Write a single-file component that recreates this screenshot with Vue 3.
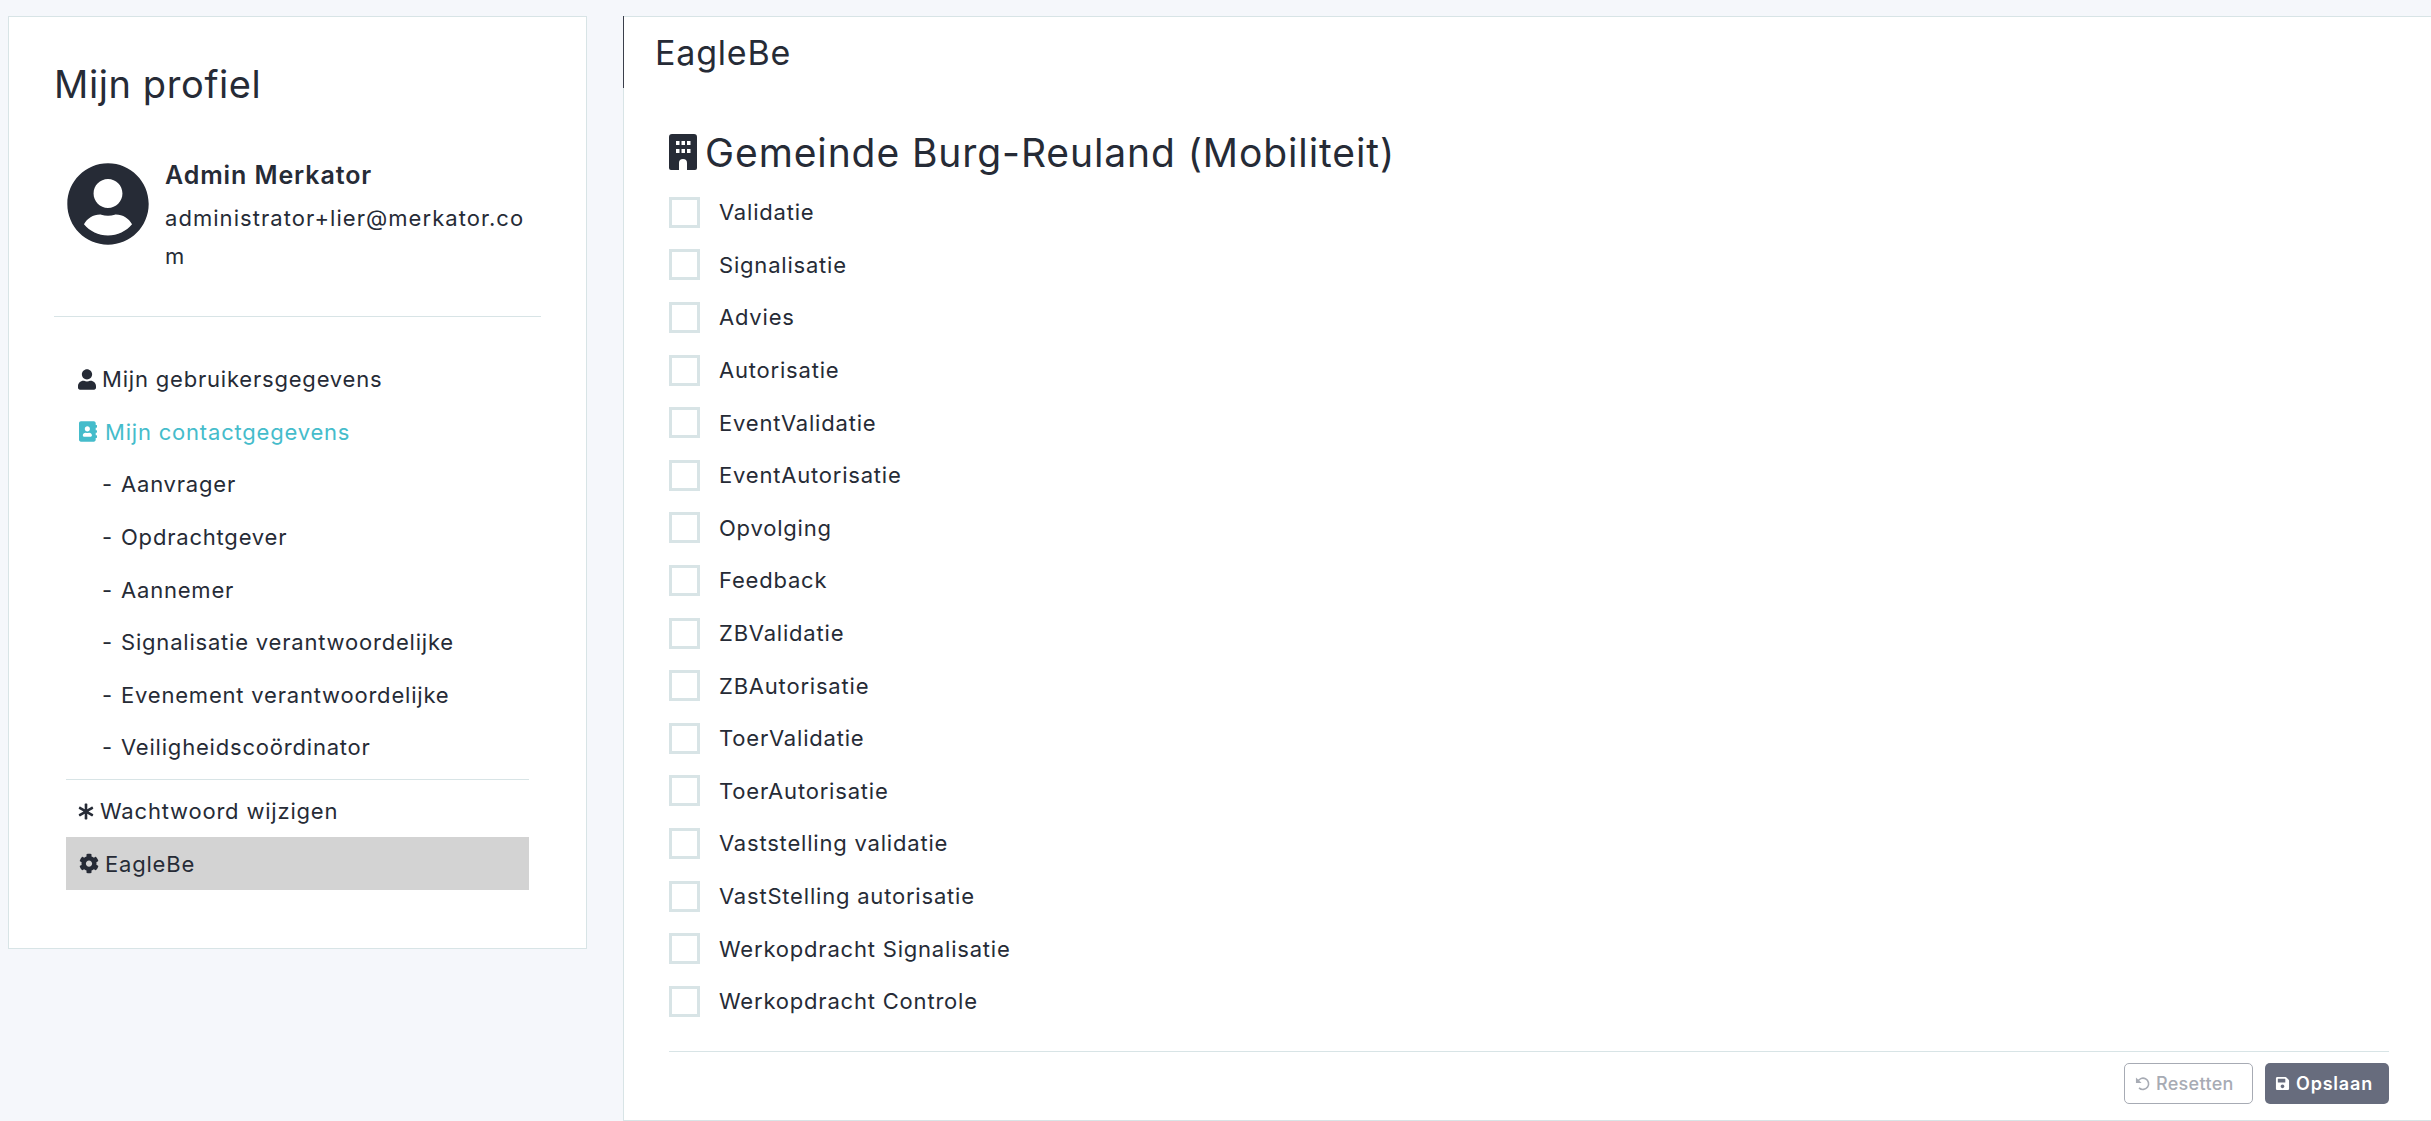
<script setup>
const subItems = [
  'Aanvrager',
  'Opdrachtgever',
  'Aannemer',
  'Signalisatie verantwoordelijke',
  'Evenement verantwoordelijke',
  'Veiligheidscoördinator',
]

const roles = [
  'Validatie',
  'Signalisatie',
  'Advies',
  'Autorisatie',
  'EventValidatie',
  'EventAutorisatie',
  'Opvolging',
  'Feedback',
  'ZBValidatie',
  'ZBAutorisatie',
  'ToerValidatie',
  'ToerAutorisatie',
  'Vaststelling validatie',
  'VastStelling autorisatie',
  'Werkopdracht Signalisatie',
  'Werkopdracht Controle',
]
</script>

<template>
  <div class="page">
    <aside class="profile-card">
      <h1 class="profile-title">Mijn profiel</h1>
      <div class="profile-user">
        <svg class="avatar" viewBox="0 0 496 512">
          <path fill="currentColor" d="M248 8C111 8 0 119 0 256s111 248 248 248 248-111 248-248S385 8 248 8zm0 96c48.6 0 88 39.4 88 88s-39.4 88-88 88-88-39.4-88-88 39.4-88 88-88zm0 344c-58.7 0-111.3-26.6-146.5-68.2 18.8-35.4 55.6-59.8 98.5-59.8 2.4 0 4.8.4 7.1 1.1 13 4.2 26.6 6.9 40.9 6.9 14.3 0 28-2.7 40.9-6.9 2.3-.7 4.7-1.1 7.1-1.1 42.9 0 79.7 24.4 98.5 59.8C359.3 421.4 306.7 448 248 448z" />
        </svg>
        <div class="user-text">
          <div class="user-name">Admin Merkator</div>
          <div class="user-mail">administrator+lier@merkator.com</div>
        </div>
      </div>
      <nav class="menu">
        <a class="menu-item">
          <svg class="icon icon-user" viewBox="0 0 448 512">
            <path fill="currentColor" d="M224 256c70.7 0 128-57.3 128-128S294.7 0 224 0 96 57.3 96 128s57.3 128 128 128zm89.6 32h-16.7c-22.2 10.2-46.9 16-72.9 16s-50.6-5.8-72.9-16h-16.7C60.2 288 0 348.2 0 422.4V464c0 26.5 21.5 48 48 48h352c26.5 0 48-21.5 48-48v-41.6c0-74.2-60.2-134.4-134.4-134.4z" />
          </svg>
          Mijn gebruikersgegevens
        </a>
        <a class="menu-item teal">
          <svg class="icon icon-book" viewBox="0 0 448 512">
            <path fill="currentColor" d="M436 160c6.6 0 12-5.4 12-12v-40c0-6.6-5.4-12-12-12h-20V48c0-26.5-21.5-48-48-48H48C21.5 0 0 21.5 0 48v416c0 26.5 21.5 48 48 48h320c26.5 0 48-21.5 48-48v-48h20c6.6 0 12-5.4 12-12v-40c0-6.6-5.4-12-12-12h-20v-64h20c6.6 0 12-5.4 12-12v-40c0-6.6-5.4-12-12-12h-20v-64h20zm-228-32c35.3 0 64 28.7 64 64s-28.7 64-64 64-64-28.7-64-64 28.7-64 64-64zm112 236.8c0 10.6-10 19.2-22.4 19.2H118.4C106 384 96 375.4 96 364.8v-19.2c0-31.8 30.1-57.6 67.2-57.6h5c12.3 5.1 25.7 8 39.8 8s27.6-2.9 39.8-8h5c37.1 0 67.2 25.8 67.2 57.6v19.2z" />
          </svg>
          Mijn contactgegevens
        </a>
        <a v-for="item in subItems" :key="item" class="menu-item sub">
          <span class="dash">-</span>{{ item }}
        </a>
        <div class="menu-divider"></div>
        <a class="menu-item">
          <svg class="icon icon-star" viewBox="0 0 512 512">
            <path fill="currentColor" d="M478.21 334.093L336 256l142.21-78.093c11.795-6.477 15.961-21.384 9.232-33.037l-19.48-33.741c-6.728-11.653-21.72-15.499-33.227-8.523L296 186.718l3.475-162.204C299.763 11.061 288.937 0 275.48 0h-38.96c-13.456 0-24.283 11.061-23.994 24.514L216 186.718 77.265 102.607c-11.506-6.976-26.499-3.13-33.227 8.523l-19.48 33.741c-6.728 11.653-2.562 26.56 9.233 33.037L176 256 33.79 334.093c-11.795 6.477-15.961 21.384-9.232 33.037l19.48 33.741c6.728 11.653 21.721 15.499 33.227 8.523L216 325.282l-3.475 162.204C212.237 500.939 223.064 512 236.52 512h38.961c13.456 0 24.283-11.061 23.995-24.514L296 325.282l138.735 84.111c11.506 6.976 26.499 3.13 33.227-8.523l19.48-33.741c6.728-11.653 2.563-26.559-9.232-33.036z" />
          </svg>
          Wachtwoord wijzigen
        </a>
        <a class="menu-item selected">
          <svg class="icon icon-cog" viewBox="0 0 512 512">
            <path fill="currentColor" d="M487.4 315.7l-42.6-24.6c4.3-23.2 4.3-47 0-70.2l42.6-24.6c4.9-2.8 7.1-8.6 5.5-14-11.1-35.6-30-67.8-54.7-94.6-3.8-4.1-10-5.1-14.8-2.3L380.8 110c-17.9-15.4-38.5-27.3-60.8-35.1V25.8c0-5.6-3.9-10.5-9.4-11.7-36.7-8.2-74.3-7.8-109.2 0-5.5 1.2-9.4 6.1-9.4 11.7V75c-22.2 7.9-42.8 19.8-60.8 35.1L88.7 85.5c-4.9-2.8-11-1.9-14.8 2.3-24.7 26.7-43.6 58.9-54.7 94.6-1.7 5.4.6 11.2 5.5 14L67.3 221c-4.3 23.2-4.3 47 0 70.2l-42.6 24.6c-4.9 2.8-7.1 8.6-5.5 14 11.1 35.6 30 67.8 54.7 94.6 3.8 4.1 10 5.1 14.8 2.3l42.6-24.6c17.9 15.4 38.5 27.3 60.8 35.1v49.2c0 5.6 3.9 10.5 9.4 11.7 36.7 8.2 74.3 7.8 109.2 0 5.5-1.2 9.4-6.1 9.4-11.7v-49.2c22.2-7.9 42.8-19.8 60.8-35.1l42.6 24.6c4.9 2.8 11 1.9 14.8-2.3 24.7-26.7 43.6-58.9 54.7-94.6 1.5-5.5-.7-11.3-5.6-14.1zM256 336c-44.1 0-80-35.9-80-80s35.9-80 80-80 80 35.9 80 80-35.9 80-80 80z" />
          </svg>
          EagleBe
        </a>
      </nav>
    </aside>

    <main class="panel">
      <header class="panel-header">EagleBe</header>
      <section class="panel-body">
        <h2 class="org-title">
          <svg class="icon-building" viewBox="0 0 28 36">
            <path fill="currentColor" fill-rule="evenodd" d="M3 0h22a3 3 0 0 1 3 3v31a2 2 0 0 1-2 2h-8v-7a4 4 0 0 0-8 0v7H2a2 2 0 0 1-2-2V3a3 3 0 0 1 3-3zM7 7v4h3.500V7zM12.500 7v4h3.500V7zM18 7v4h3.500V7zM7 15v4h3.500v-4zM12.500 15v4h3.500v-4zM18 15v4h3.500v-4z" />
          </svg>
          Gemeinde Burg-Reuland (Mobiliteit)
        </h2>
        <ul class="role-list">
          <li v-for="role in roles" :key="role" class="role-row">
            <span class="check"></span>
            <span class="role-label">{{ role }}</span>
          </li>
        </ul>
        <footer class="panel-footer">
          <button class="btn btn-reset">
            <svg class="btn-icon" viewBox="0 0 16 16">
              <path fill="none" stroke="currentColor" stroke-width="1.700" d="M2.800 6.500A6 6 0 1 1 4.300 12.600" />
              <path fill="currentColor" d="M1 1.500v6h6z" />
            </svg>
            Resetten
          </button>
          <button class="btn btn-save">
            <svg class="btn-icon" viewBox="0 0 448 512">
              <path fill="currentColor" d="M433.941 129.941l-83.882-83.882A48 48 0 0 0 316.118 32H48C21.49 32 0 53.49 0 80v352c0 26.51 21.49 48 48 48h352c26.51 0 48-21.49 48-48V163.882a48 48 0 0 0-14.059-33.941zM224 416c-35.346 0-64-28.654-64-64 0-35.346 28.654-64 64-64s64 28.654 64 64c0 35.346-28.654 64-64 64zm96-304.520V212c0 6.627-5.373 12-12 12H76c-6.627 0-12-5.373-12-12V108c0-6.627 5.373-12 12-12h228.520c3.183 0 6.235 1.264 8.485 3.515l3.480 3.480A11.996 11.996 0 0 1 320 111.480z" />
            </svg>
            Opslaan
          </button>
        </footer>
      </section>
    </main>
  </div>
</template>

<style>
html,
body {
  margin: 0;
  background: #f5f7fb;
  overflow: hidden;
}
</style>

<style scoped>
.page {
  display: flex;
  align-items: flex-start;
  gap: 36px;
  width: 2431px;
  height: 1121px;
  box-sizing: border-box;
  padding: 16px 0 0 8px;
  background: #f5f7fb;
  color: #262b36;
  font-family: Inter, "Open Sans", sans-serif;
  font-size: 22px;
  letter-spacing: 0.8px;
}

.profile-card {
  width: 579px;
  height: 933px;
  flex-shrink: 0;
  box-sizing: border-box;
  padding: 40px 45px 0;
  background: #fff;
  border: 1px solid #d8e4e6;
}

.profile-title {
  margin: 0;
  height: 54px;
  font-size: 38px;
  line-height: 54px;
  font-weight: 400;
  letter-spacing: 0.6px;
}

.profile-user {
  display: flex;
  gap: 15px;
  padding: 51px 12px 0;
  height: 206px;
  box-sizing: border-box;
  border-bottom: 1px solid #d8e4e6;
}

.avatar {
  width: 84px;
  height: 84px;
  flex-shrink: 0;
}

.user-text {
  flex: 1;
  min-width: 0;
  word-break: break-all;
}

.user-name {
  font-weight: 600;
  font-size: 25px;
  line-height: 26px;
  letter-spacing: 0.9px;
  margin-bottom: 12px;
}

.user-mail {
  line-height: 37.5px;
  letter-spacing: 1.05px;
}

.menu {
  display: flex;
  flex-direction: column;
  margin: 36px 12px 0;
}

.menu-item {
  display: flex;
  align-items: center;
  height: 52.6px;
  padding-left: 12px;
  white-space: nowrap;
}

.teal {
  color: #45bccb;
}

.selected {
  height: 53px;
  background: #d3d3d3;
}

.sub {
  padding-left: 36px;
}

.dash {
  width: 19px;
}

.menu-divider {
  height: 1px;
  margin-top: 5px;
  margin-bottom: 5px;
  background: #d8e4e6;
}

.icon {
  flex-shrink: 0;
  margin-right: 6px;
}

.icon-user {
  width: 18px;
  height: 21px;
}

.icon-book {
  width: 18px;
  height: 21px;
  margin-left: 1px;
  margin-right: 8px;
}

.icon-star {
  width: 16px;
  height: 17px;
}

.icon-cog {
  width: 20px;
  height: 21px;
  margin-left: 1px;
}

.panel {
  flex: 1;
  height: 1105px;
  box-sizing: border-box;
  background: #fff;
  border: 1px solid #d8e4e6;
  border-right: 0;
}

.panel-header {
  height: 72px;
  box-sizing: border-box;
  padding-left: 31px;
  margin-left: -1px;
  margin-top: -1px;
  border-left: 1px solid #3a3f4b;
  font-size: 34px;
  line-height: 73px;
}

.panel-body {
  padding: 0 42px 0 45px;
}

.org-title {
  display: flex;
  align-items: center;
  gap: 8px;
  height: 36px;
  margin: 46px 0 0;
  font-size: 39px;
  font-weight: 400;
  letter-spacing: 0.9px;
  white-space: nowrap;
}

.icon-building {
  width: 28px;
  height: 36px;
  flex-shrink: 0;
}

.role-list {
  list-style: none;
  margin: 16px 0 0;
  padding: 0;
}

.role-row {
  display: flex;
  align-items: center;
  gap: 19px;
  height: 52.6px;
}

.check {
  width: 31px;
  height: 31px;
  box-sizing: border-box;
  border: 3px solid #d8e4e6;
}

.panel-footer {
  display: flex;
  justify-content: flex-end;
  gap: 12px;
  margin-top: 23px;
  padding-top: 11px;
  border-top: 1px solid #d8e4e6;
}

.btn {
  display: flex;
  align-items: center;
  height: 41px;
  padding: 0;
  border-radius: 5px;
  font-family: inherit;
  font-size: 18px;
}

.btn-reset {
  gap: 6px;
  width: 129px;
  padding-left: 10px;
  background: #fff;
  color: #a7abb4;
  border: 1px solid #a7abb4;
  font-weight: 500;
  letter-spacing: 0.3px;
}

.btn-save {
  gap: 6px;
  width: 124px;
  padding-left: 10px;
  background: #676c7d;
  color: #fff;
  border: 0;
  font-weight: 600;
  letter-spacing: 0.8px;
}

.btn-icon {
  width: 15px;
  height: 15px;
}
</style>
